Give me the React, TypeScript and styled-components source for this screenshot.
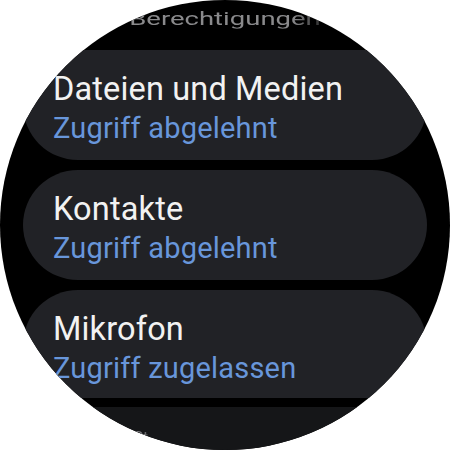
import styled, { createGlobalStyle } from "styled-components";

const GlobalStyle = createGlobalStyle`
  html, body {
    margin: 0;
    padding: 0;
    background: #ffffff;
  }
  body {
    font-family: Roboto, "Noto Sans", sans-serif;
  }
`;

const Screen = styled.div`
  width: 450px;
  height: 450px;
  border-radius: 50%;
  background: #000000;
  overflow: hidden;

  display: flex;
  flex-direction: column;
`;

const Header = styled.div`
  height: 50px;
  flex-shrink: 0;

  display: flex;
  justify-content: center;
  align-items: flex-start;
`;

const HeaderText = styled.span`
  display: inline-block;
  margin-top: 1px;

  color: #8a8a8c;
  font-size: 27.5px;
  line-height: 30px;

  transform: scaleY(0.64);
  transform-origin: 50% 80%;
  -webkit-mask-image: linear-gradient(90deg, #000 85%, rgba(0, 0, 0, 0.35) 100%);
  mask-image: linear-gradient(90deg, #000 85%, rgba(0, 0, 0, 0.35) 100%);
`;

const List = styled.div`
  display: flex;
  flex-direction: column;
  gap: 10px;

  padding: 0 23px;
`;

type Cut = "top" | "bottom" | "none";

const Chip = styled.div<{ $cut: Cut; $height: number }>`
  height: ${props => props.$height}px;
  flex-shrink: 0;
  box-sizing: border-box;
  padding: 21px 30px 0;

  background: #212226;
  border-radius: ${props =>
    props.$cut === "top"
      ? "0 0 55px 55px"
      : props.$cut === "bottom"
      ? "55px 55px 0 0"
      : "55px"};
`;

const Title = styled.div`
  color: #f2f2f2;
  font-size: 32.5px;
  line-height: 36px;
  letter-spacing: 0.15px;
  white-space: nowrap;
`;

const Subtitle = styled.div`
  margin-top: 3px;

  color: #6896da;
  font-size: 29px;
  line-height: 36px;
  letter-spacing: 0.2px;
  white-space: nowrap;
`;

const FadedChip = styled.div`
  height: 60px;
  flex-shrink: 0;
  margin: -1px 10px 0;
  box-sizing: border-box;
  padding: 20px 0 0 100px;

  background: #151618;
  border-radius: 40px 40px 0 0;
`;

const FadedTitle = styled.span`
  display: inline-block;

  color: #7c7c80;
  font-size: 17px;
  line-height: 20px;
  white-space: nowrap;
  -webkit-mask-image: linear-gradient(90deg, #000 18%, transparent 24%);
  mask-image: linear-gradient(90deg, #000 18%, transparent 24%);
`;

const permissions = [
  { name: "Dateien und Medien", state: "Zugriff abgelehnt", cut: "top" as Cut, height: 110 },
  { name: "Kontakte", state: "Zugriff abgelehnt", cut: "none" as Cut, height: 110 },
  { name: "Mikrofon", state: "Zugriff zugelassen", cut: "bottom" as Cut, height: 108 },
];

const App = (): JSX.Element => {
  return (
    <>
      <GlobalStyle />
      <Screen>
        <Header>
          <HeaderText>Berechtigungen</HeaderText>
        </Header>
        <List>
          {permissions.map(p => (
            <Chip key={p.name} $cut={p.cut} $height={p.height}>
              <Title>{p.name}</Title>
              <Subtitle>{p.state}</Subtitle>
            </Chip>
          ))}
          <FadedChip>
            <FadedTitle>Standort</FadedTitle>
          </FadedChip>
        </List>
      </Screen>
    </>
  );
};

export default App;
